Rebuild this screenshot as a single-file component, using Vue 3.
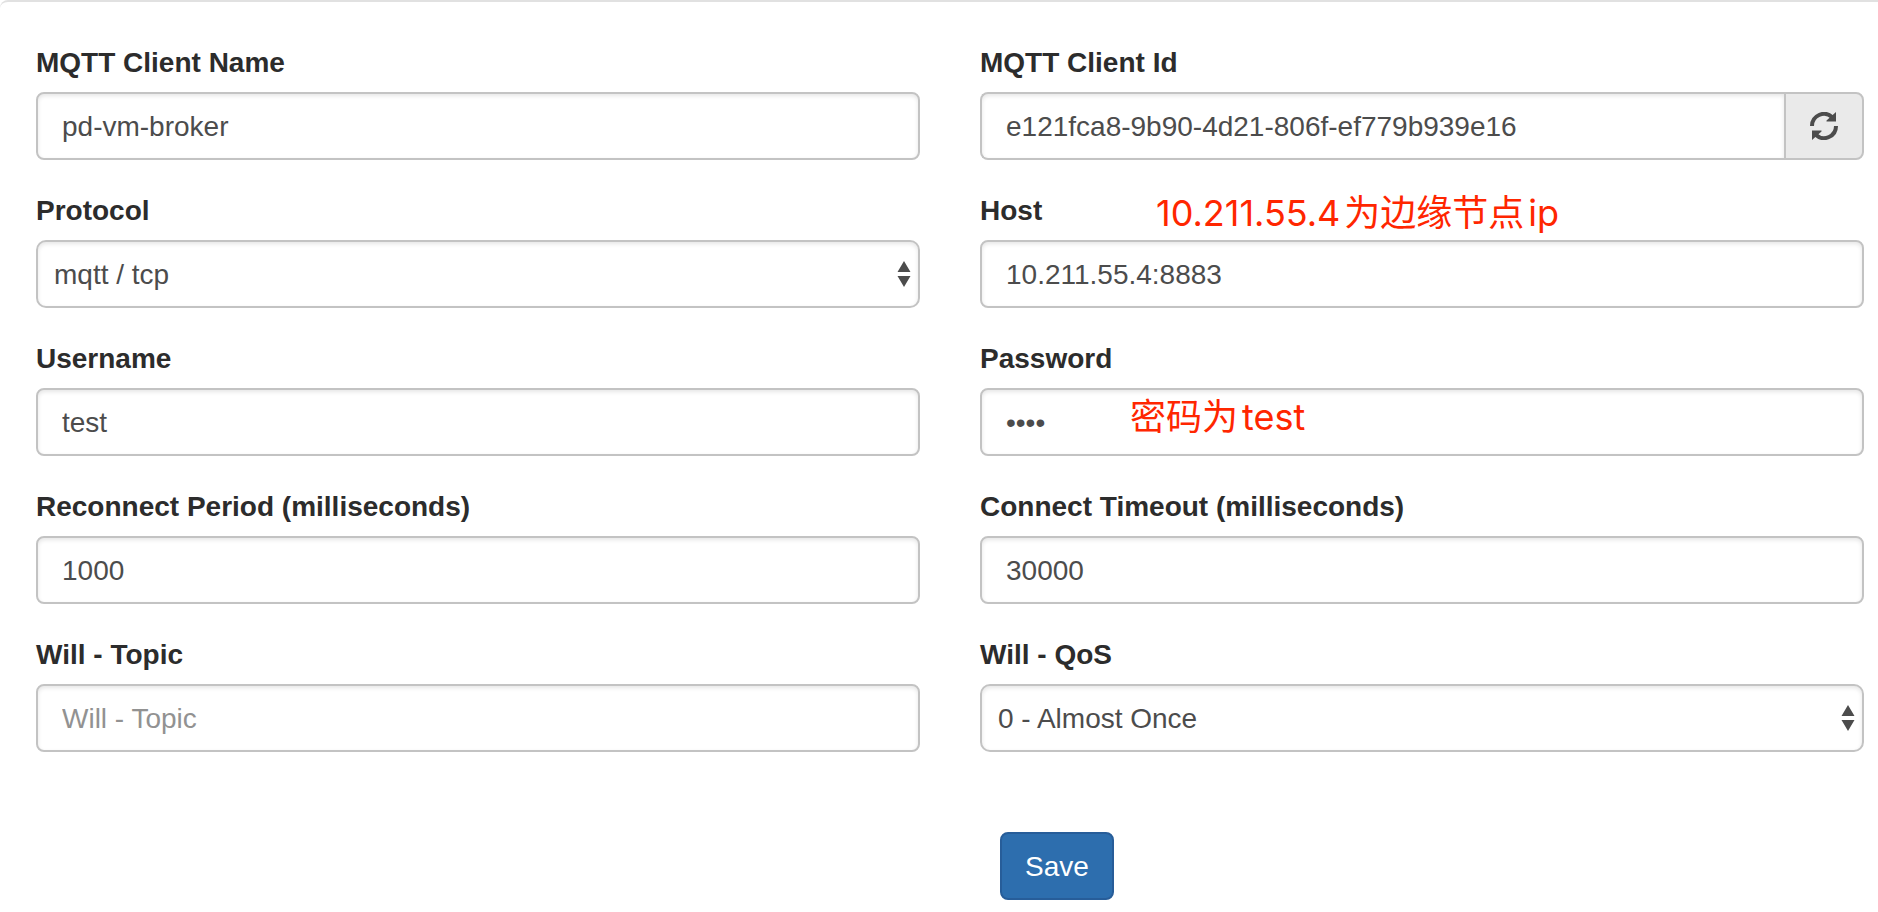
<script setup>
import { reactive } from 'vue'

const form = reactive({
  name: 'pd-vm-broker',
  clientId: 'e121fca8-9b90-4d21-806f-ef779b939e16',
  protocol: 'mqtt',
  host: '10.211.55.4:8883',
  username: 'test',
  password: 'test',
  reconnect: '1000',
  timeout: '30000',
  willTopic: '',
  willQos: '0',
})

const fields = [
  { key: 'name', label: 'MQTT Client Name' },
  { key: 'clientId', label: 'MQTT Client Id', refresh: true },
  { key: 'protocol', label: 'Protocol', options: [
    { value: 'mqtt', text: 'mqtt / tcp' },
    { value: 'ws', text: 'ws' },
  ] },
  { key: 'host', label: 'Host' },
  { key: 'username', label: 'Username' },
  { key: 'password', label: 'Password', type: 'password' },
  { key: 'reconnect', label: 'Reconnect Period (milliseconds)' },
  { key: 'timeout', label: 'Connect Timeout (milliseconds)' },
  { key: 'willTopic', label: 'Will - Topic', placeholder: 'Will - Topic' },
  { key: 'willQos', label: 'Will - QoS', options: [
    { value: '0', text: '0 - Almost Once' },
    { value: '1', text: '1 - Atleast Once' },
    { value: '2', text: '2 - Exactly Once' },
  ] },
]

function newClientId() {
  form.clientId = crypto.randomUUID()
}
</script>

<template>
  <form class="panel" autocomplete="off" @submit.prevent>
    <div class="grid">
      <div v-for="f in fields" :key="f.key" class="group">
        <label class="label" :for="f.key">{{ f.label }}</label>
        <div v-if="f.options" class="select-wrap">
          <select :id="f.key" v-model="form[f.key]" class="control select">
            <option v-for="o in f.options" :key="o.value" :value="o.value">{{ o.text }}</option>
          </select>
          <svg class="arrows" viewBox="0 0 14 26" aria-hidden="true">
            <path d="M7 0 13.500 11H.5zM.5 15h13L7 26z" />
          </svg>
        </div>
        <div v-else class="input-wrap">
          <input
            :id="f.key"
            v-model="form[f.key]"
            class="control"
            :class="{ joined: f.refresh }"
            :type="f.type || 'text'"
            :placeholder="f.placeholder"
            spellcheck="false"
          />
          <button v-if="f.refresh" class="addon" type="button" aria-label="Generate client id" @click="newClientId">
            <svg class="refresh" viewBox="0 0 28 28" aria-hidden="true">
              <path class="arc" d="M2 14A12 12 0 0 1 22 5" />
              <path class="arc" d="M26 14A12 12 0 0 1 6 23" />
              <path d="M26 0v9.500H16.500V8.500zM2 28v-9.500h9.500v1z" />
            </svg>
          </button>
        </div>
        <span v-if="f.key === 'host'" class="note note-host"><span>10.211.55.4</span><span>为边缘节点</span><span>ip</span></span>
        <span v-if="f.key === 'password'" class="note note-password"><span>密码为</span><span>test</span></span>
      </div>
    </div>
    <div class="actions">
      <button class="save" type="submit">Save</button>
    </div>
  </form>
</template>

<style>
body {
  margin: 0;
  background: #fff;
}
</style>

<style scoped>
.panel {
  box-sizing: border-box;
  padding: 40px 14px 12px 36px;
  border-top: 2px solid #e1e1e1;
  border-top-left-radius: 8px;
  font-family: "Liberation Sans", Arial, sans-serif;
  font-size: 28px;
  line-height: 42px;
  color: #2c2c2c;
}

.grid {
  display: grid;
  grid-template-columns: 1fr 1fr;
  gap: 30px 60px;
}

.group {
  position: relative;
  min-width: 0;
}

.label {
  display: block;
  width: fit-content;
  margin-bottom: 8px;
  font-weight: 700;
}

.input-wrap {
  display: flex;
}

.select-wrap {
  position: relative;
}

.control {
  box-sizing: border-box;
  display: block;
  flex: 1;
  width: 100%;
  min-width: 0;
  height: 68px;
  margin: 0;
  padding: 12px 24px 10px;
  border: 2px solid #c3c3c3;
  border-radius: 8px;
  outline: 0;
  background: #fff;
  box-shadow: inset 0 2px 4px rgba(0, 0, 0, 0.1);
  font: inherit;
  color: #4c4c4c;
}

.control::placeholder {
  color: #929292;
  opacity: 1;
}

.joined {
  border-right: 0;
  border-radius: 8px 0 0 8px;
}

.select {
  appearance: none;
  padding: 12px 40px 10px 16px;
  border-radius: 10px;
}

.arrows {
  position: absolute;
  top: 21px;
  right: 9px;
  width: 14px;
  height: 26px;
  fill: #4c4c4c;
  pointer-events: none;
}

.addon {
  box-sizing: border-box;
  display: flex;
  align-items: center;
  justify-content: center;
  width: 80px;
  margin: 0;
  padding: 0;
  border: 2px solid #c3c3c3;
  border-radius: 0 8px 8px 0;
  background: #eaeaea;
}

.refresh {
  width: 28px;
  height: 28px;
  fill: #4c4c4c;
}

.arc {
  fill: none;
  stroke: #4c4c4c;
  stroke-width: 4;
}

.note {
  position: absolute;
  display: flex;
  gap: 4px;
  font-family: Inter, "Noto Sans CJK SC", sans-serif;
  font-size: 36px;
  font-weight: 400;
  white-space: nowrap;
  color: #ff2600;
  pointer-events: none;
}

.note-host {
  top: 2px;
  left: 176px;
}

.note-password {
  top: 58px;
  left: 150px;
}

.actions {
  margin-top: 80px;
  margin-left: calc(50% + 50px);
}

.save {
  display: block;
  height: 68px;
  margin: 0;
  padding: 12px 23px 10px;
  border: 2px solid #275d99;
  border-radius: 8px;
  background: #2d6eae;
  font: inherit;
  color: #fff;
}
</style>
